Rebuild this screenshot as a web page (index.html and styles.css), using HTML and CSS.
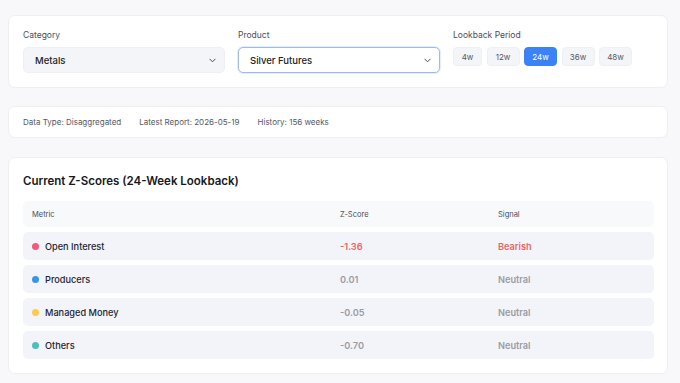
FILE: index.html
```html
<!DOCTYPE html>
<html lang="en">

<head>
    <meta charset="UTF-8">
    <meta name="viewport" content="width=device-width, initial-scale=1.0">
    <title>COT Z-Scores</title>
    <link rel="stylesheet" href="styles.css">
</head>

<body>
    <main class="page">
        <section class="card filters">
            <div class="field">
                <label class="field-label">Category</label>
                <div class="select">
                    <span>Metals</span>
                    <svg class="chevron" viewBox="0 0 8 5" width="7" height="5"><path d="M1 1l3 3 3-3" fill="none" stroke="#444" stroke-width="1.1" stroke-linecap="round" stroke-linejoin="round"/></svg>
                </div>
            </div>
            <div class="field">
                <label class="field-label">Product</label>
                <div class="select select-focus">
                    <span>Silver Futures</span>
                    <svg class="chevron" viewBox="0 0 8 5" width="7" height="5"><path d="M1 1l3 3 3-3" fill="none" stroke="#444" stroke-width="1.1" stroke-linecap="round" stroke-linejoin="round"/></svg>
                </div>
            </div>
            <div class="field">
                <label class="field-label">Lookback Period</label>
                <div class="periods">
                    <button class="period short">4w</button>
                    <button class="period">12w</button>
                    <button class="period active">24w</button>
                    <button class="period">36w</button>
                    <button class="period">48w</button>
                </div>
            </div>
        </section>

        <section class="card info">
            <span>Data Type: Disaggregated</span>
            <span>Latest Report: 2026-05-19</span>
            <span>History: 156 weeks</span>
        </section>

        <section class="card scores">
            <h2>Current Z-Scores (24-Week Lookback)</h2>
            <div class="table">
                <div class="row head">
                    <span>Metric</span>
                    <span>Z-Score</span>
                    <span>Signal</span>
                </div>
                <div class="row">
                    <span class="metric"><i class="dot pink"></i>Open Interest</span>
                    <span class="value bearish">-1.36</span>
                    <span class="signal bearish">Bearish</span>
                </div>
                <div class="row">
                    <span class="metric"><i class="dot blue"></i>Producers</span>
                    <span class="value">0.01</span>
                    <span class="signal">Neutral</span>
                </div>
                <div class="row">
                    <span class="metric"><i class="dot yellow"></i>Managed Money</span>
                    <span class="value">-0.05</span>
                    <span class="signal">Neutral</span>
                </div>
                <div class="row">
                    <span class="metric"><i class="dot teal"></i>Others</span>
                    <span class="value">-0.70</span>
                    <span class="signal">Neutral</span>
                </div>
            </div>
        </section>
    </main>
</body>

</html>
```

FILE: styles.css
```css
/* Reset */
* {
    margin: 0;
    padding: 0;
    box-sizing: border-box;
}

body {
    font-family: 'Inter', 'Noto Sans', sans-serif;
    color: #1f2230;
    background-color: #f8f8fb;
}

.page {
    padding: 15px 12px 0 8px;
    display: flex;
    flex-direction: column;
}

.card {
    background: #fff;
    border: 1px solid #eeeff3;
    border-radius: 7px;
}

/* Filters */
.filters {
    display: grid;
    grid-template-columns: 202px 202px auto;
    column-gap: 13px;
    padding: 13px 14px 14px;
}

.field-label {
    display: block;
    font-size: 8.5px;
    color: #4a4d5a;
    line-height: 12px;
    margin-bottom: 6px;
}

.select {
    height: 26px;
    display: flex;
    align-items: center;
    justify-content: space-between;
    padding: 0 8px 0 11px;
    background: #f4f5f9;
    border: 1px solid #eef0f4;
    border-radius: 5px;
    font-size: 9.5px;
    font-weight: 500;
    color: #222;
}

.select-focus {
    background: #fff;
    border-color: #9dbaf0;
    box-shadow: 0 0 0 1px #e6eefc;
}

.periods {
    display: flex;
    gap: 4.5px;
}

.period {
    height: 19px;
    width: 33px;
    border: 1px solid #eff0f4;
    border-radius: 4px;
    background: #f4f5f8;
    font-family: inherit;
    font-size: 8px;
    color: #555866;
}

.period.short {
    width: 29px;
}

.period.active {
    background: #3b82f6;
    border-color: #3b82f6;
    color: #fff;
}

/* Info bar */
.info {
    margin-top: 18px;
    height: 32px;
    display: flex;
    align-items: center;
    gap: 18px;
    padding: 0 14px;
    font-size: 8px;
    color: #555866;
}

/* Scores */
.scores {
    margin-top: 19px;
    padding: 15px 13px 14px 14px;
}

.scores h2 {
    font-size: 11.5px;
    font-weight: 600;
    color: #161822;
    line-height: 16px;
    margin-bottom: 12px;
}

.table {
    display: flex;
    flex-direction: column;
    gap: 5px;
}

.row {
    display: grid;
    grid-template-columns: 308px 158px 1fr;
    align-items: center;
    height: 28px;
    padding: 0 9px;
    background: #f3f4f9;
    border-radius: 5px;
    font-size: 9.2px;
    font-weight: 500;
    color: #23252f;
}

.row.head {
    height: 26px;
    background: #f8f9fb;
    font-size: 7.5px;
    font-weight: 400;
    color: #4a4d5a;
}

.metric {
    display: flex;
    align-items: center;
    gap: 6px;
}

.dot {
    width: 7px;
    height: 7px;
    border-radius: 50%;
}

.dot.pink { background: #f3577c; }
.dot.blue { background: #3797e6; }
.dot.yellow { background: #fbcc4a; }
.dot.teal { background: #4bbfbe; }

.value,
.signal {
    font-weight: 600;
    color: #9a9ca4;
}

.bearish {
    color: #ef6461;
}
```
